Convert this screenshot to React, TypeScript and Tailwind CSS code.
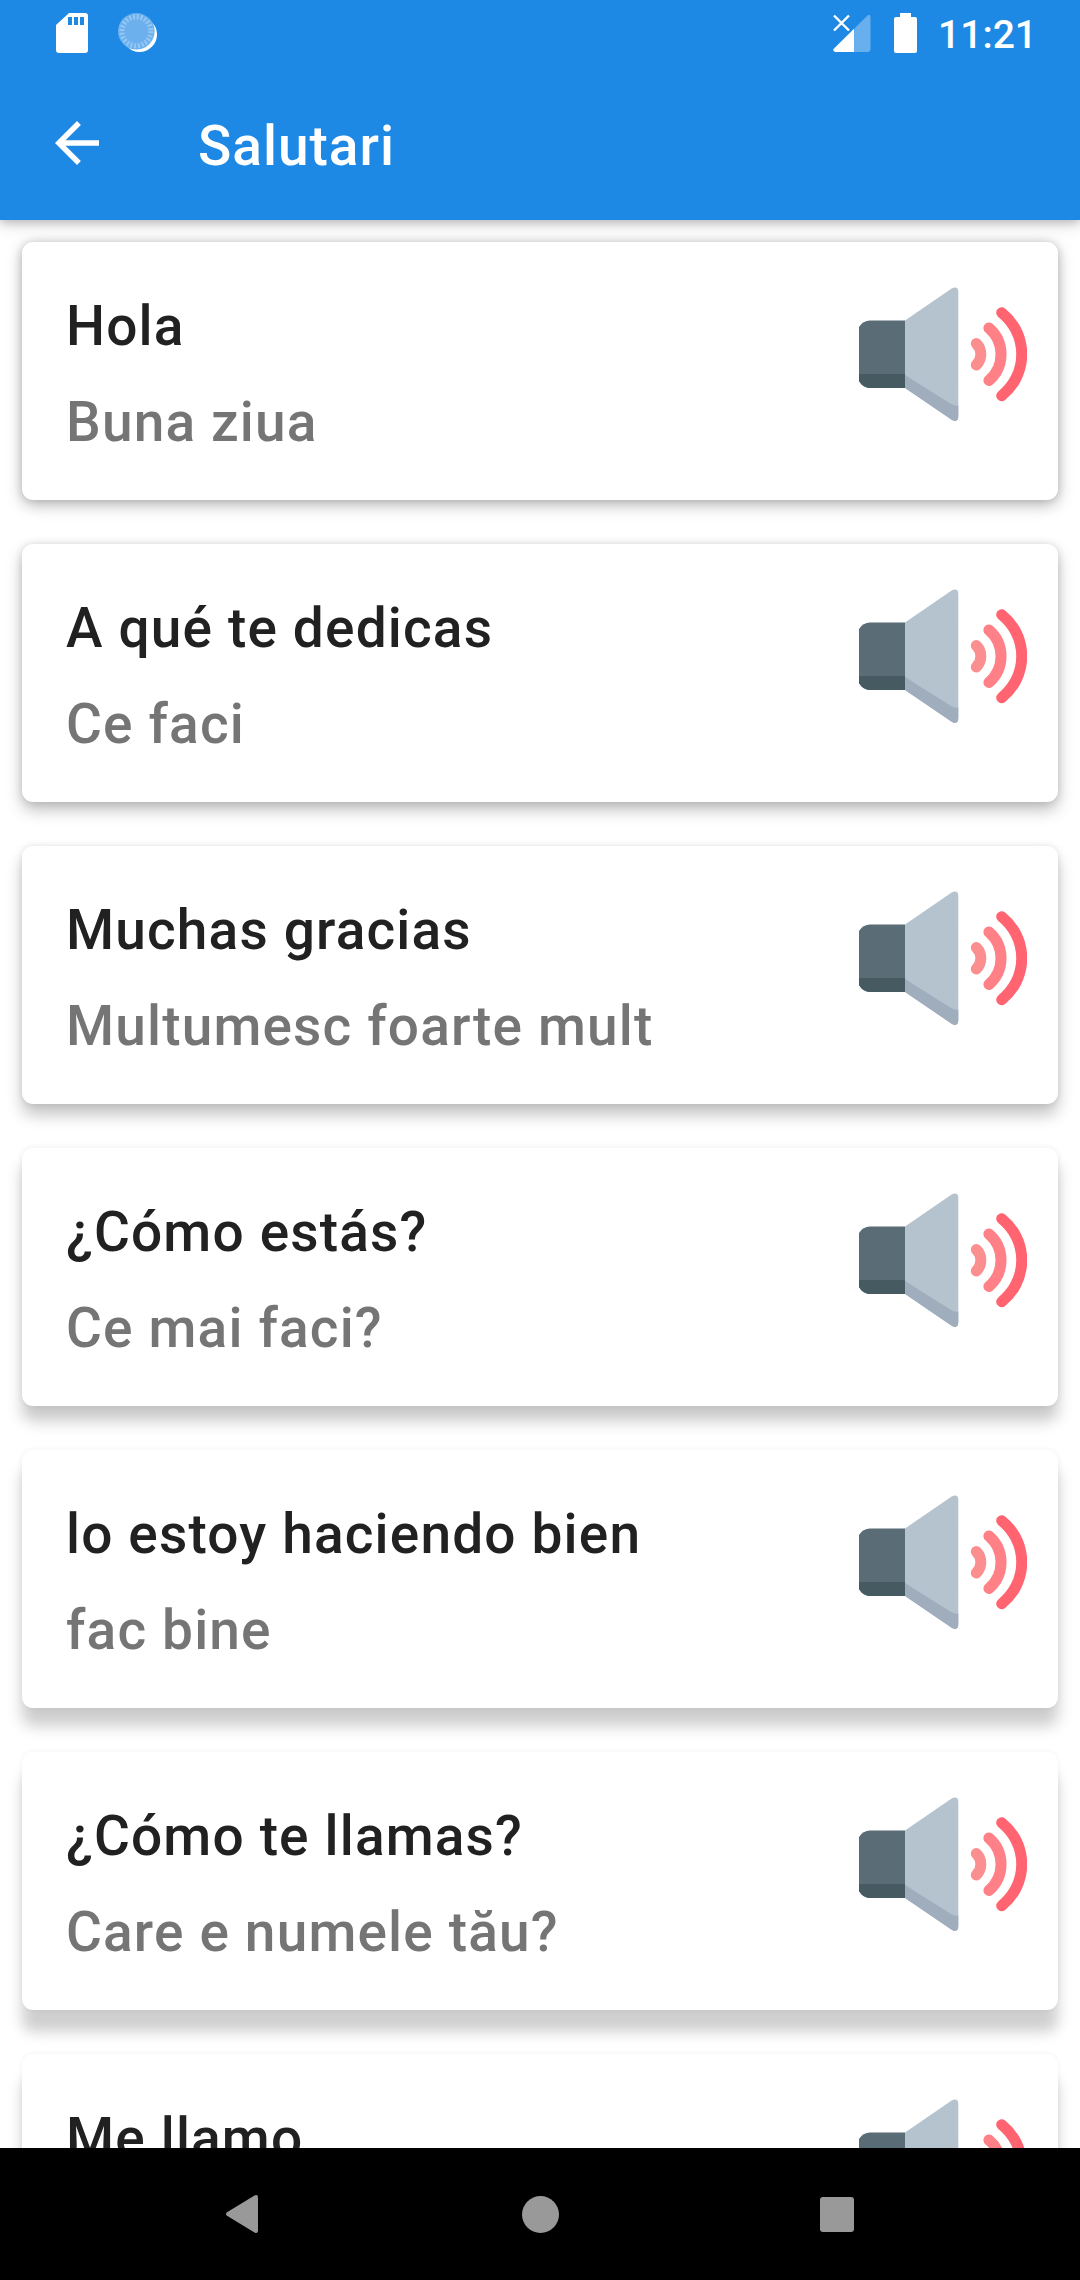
import { clsx } from 'clsx'

interface Greeting {
  text: string
  translation?: string
  shadow: string
}

const greetings: Greeting[] = [
  { text: 'Hola', translation: 'Buna ziua', shadow: 'shadow-[0_5px_16px_rgba(0,0,0,0.27),0_0_8px_rgba(0,0,0,0.14)]' },
  { text: 'A qué te dedicas', translation: 'Ce faci', shadow: 'shadow-[0_8px_16px_rgba(0,0,0,0.25),0_0_8px_rgba(0,0,0,0.12)]' },
  { text: 'Muchas gracias', translation: 'Multumesc foarte mult', shadow: 'shadow-[0_11px_16px_rgba(0,0,0,0.23),0_0_7px_rgba(0,0,0,0.1)]' },
  { text: '¿Cómo estás?', translation: 'Ce mai faci?', shadow: 'shadow-[0_15px_15px_rgba(0,0,0,0.21),0_0_7px_rgba(0,0,0,0.07)]' },
  { text: 'lo estoy haciendo bien', translation: 'fac bine', shadow: 'shadow-[0_18px_15px_rgba(0,0,0,0.2),0_0_6px_rgba(0,0,0,0.06)]' },
  { text: '¿Cómo te llamas?', translation: 'Care e numele tău?', shadow: 'shadow-[0_22px_14px_rgba(0,0,0,0.19),0_0_5px_rgba(0,0,0,0.06)]' },
  { text: 'Me llamo', shadow: 'shadow-[0_24px_14px_rgba(0,0,0,0.19),0_0_5px_rgba(0,0,0,0.06)]' },
]

function SpeakerIcon() {
  return (
    <svg width="168" height="137" viewBox="0 0 168 137" fill="none" className="shrink-0">
      <path d="M0 41Q4 34.500 11 34.500H46V102H11Q4 102 0 95Z" fill="#5a6c75" />
      <path d="M0 88H46V102H11Q4 102 0 95Z" fill="#465a61" />
      <path d="M46 34.500L93 2.200Q99.300 0 99.300 6V130Q99.300 137 93 134L46 102Z" fill="#b5c3cf" />
      <path d="M46 89L92 118Q96 120.500 99.300 119.500V130Q99.300 137 93 134L46 102Z" fill="#9fadbd" />
      <g strokeLinecap="round">
        <path d="M117.300 57.500A15 15 0 0 1 117.300 79" stroke="#fb8f90" strokeWidth="11" />
        <path d="M129.900 42A34.500 34.500 0 0 1 129.900 94.500" stroke="#ff8087" strokeWidth="11" />
        <path d="M142.700 26.700A53 53 0 0 1 142.700 109.700" stroke="#ff6470" strokeWidth="11" />
      </g>
    </svg>
  )
}

function GreetingCard({ text, translation, shadow }: Greeting) {
  return (
    <div className={clsx('flex h-[258px] shrink-0 items-start justify-between rounded-[11px] bg-white pl-11 pr-[31px]', shadow)}>
      <div className="pt-9 text-[55px] font-medium leading-[96px] tracking-[1.16px]">
        <p className="text-[#212121]">{text}</p>
        {translation && <p className="text-[#757575]">{translation}</p>}
      </div>
      <button className="pt-11" aria-label={text}>
        <SpeakerIcon />
      </button>
    </div>
  )
}

function StatusBar() {
  return (
    <div className="flex h-[66px] items-start justify-between pl-14 pr-[43px]">
      <div className="flex gap-[30px] pt-[13px]">
        <svg width="32" height="40" viewBox="0 0 32 40" fill="none">
          <path d="M13 0H29Q32 0 32 3V37Q32 40 29 40H3Q0 40 0 37V12Z" fill="#fff" />
          <path d="M14 4V12M20 4V12M26 4V12" stroke="#1e88e5" strokeWidth="4" />
        </svg>
        <svg width="40" height="40" viewBox="0 0 40 40" fill="none">
          <circle cx="21.500" cy="21.500" r="17.500" fill="#fff" />
          <circle cx="18.300" cy="18.300" r="18.300" fill="#6cb1ee" />
          <circle cx="18.300" cy="18.300" r="14.500" stroke="#97c8f3" strokeWidth="5" strokeDasharray="1.900 1.900" />
        </svg>
      </div>
      <div className="flex items-start text-white">
        <svg width="38" height="40" viewBox="0 0 38 40" fill="none" className="mt-[13px]">
          <path d="M22 15L35 2Q37.500 1 37.500 4V36Q37.500 39 34.500 39H22Z" fill="#fff" fillOpacity="0.33" />
          <path d="M21.300 15.500V39H2Q-0.500 38 0.500 36Z" fill="#fff" />
          <path d="M1 2.500L16 17.500M16 2.500L1 17.500" stroke="#fff" strokeWidth="2.400" />
        </svg>
        <svg width="23" height="40" viewBox="0 0 23 40" className="ml-[23px] mt-[13px]">
          <path d="M6 0H17V4H21Q23 4 23 6V38Q23 40 21 40H2Q0 40 0 38V6Q0 4 2 4H6Z" fill="#fff" />
        </svg>
        <span className="ml-[21px] mt-3 text-[39px] font-medium leading-[46px]">11:21</span>
      </div>
    </div>
  )
}

function AppBar() {
  return (
    <header className="z-10 h-[220px] shrink-0 bg-[#1e88e5] shadow-[0_3px_9px_rgba(0,0,0,0.22),0_8px_16px_rgba(0,0,0,0.08)]">
      <StatusBar />
      <div className="flex h-[154px] items-center pl-[55px] text-white">
        <svg width="44" height="44" viewBox="4 4 16 16" fill="currentColor">
          <path d="M20 11H7.830l5.590-5.590L12 4l-8 8 8 8 1.410-1.410L7.830 13H20v-2z" />
        </svg>
        <h1 className="ml-[99px] mt-1.5 text-[55px] font-medium leading-[64px] tracking-[1px]">Salutari</h1>
      </div>
    </header>
  )
}

function NavigationBar() {
  return (
    <nav className="z-10 flex h-[132px] shrink-0 items-center justify-between bg-black px-[226px] text-[#999]">
      <svg width="32" height="38" viewBox="0 0 32 38" fill="currentColor">
        <path d="M28.500 0.600Q32 -1 32 2.500V35.500Q32 39 28.500 37.400L1 20.800Q-1 19 1 17.200Z" />
      </svg>
      <div className="ml-[2px] h-[37px] w-[37px] rounded-full bg-[#999]" />
      <div className="h-[35px] w-[34px] rounded-[3px] bg-[#999]" />
    </nav>
  )
}

export default function App() {
  return (
    <div className="flex h-[2280px] w-[1080px] flex-col overflow-hidden bg-white font-[Roboto,sans-serif]">
      <AppBar />
      <main className="flex min-h-0 flex-1 flex-col gap-11 overflow-hidden px-[22px] pt-[22px]">
        {greetings.map((greeting) => (
          <GreetingCard key={greeting.text} {...greeting} />
        ))}
      </main>
      <NavigationBar />
    </div>
  )
}
